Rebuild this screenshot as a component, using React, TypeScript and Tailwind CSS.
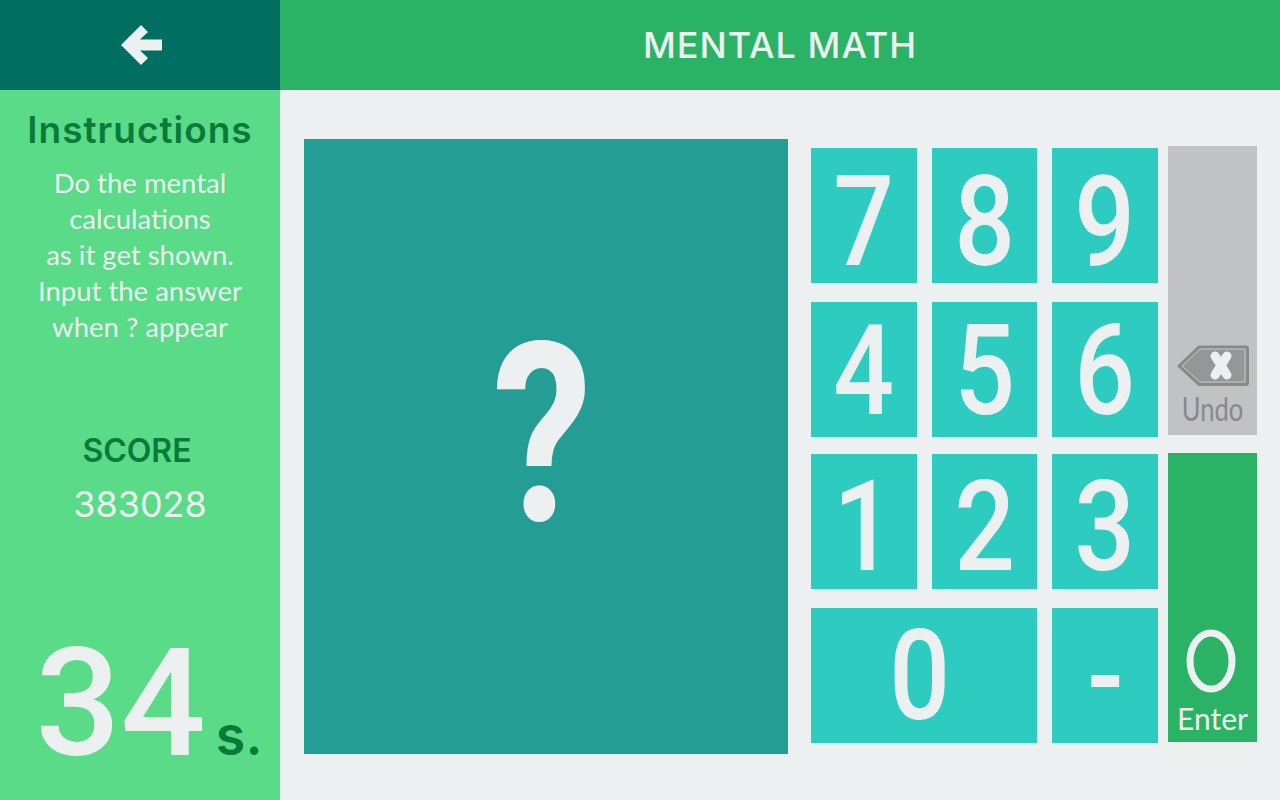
const font = { lato: "font-['Lato','Noto_Sans',sans-serif]" }

function Key({ label, className }: { label: string; className: string }) {
  return (
    <div className={`flex h-[135px] items-center justify-center bg-[#2ecbc0] font-['Roboto',sans-serif] text-[126px] font-medium leading-none text-[#ecf0f1] ${className}`}>
      <span className="inline-block scale-x-[0.85]">{label}</span>
    </div>
  )
}

function UndoIcon() {
  return (
    <svg width="72" height="42" viewBox="0 0 72 42">
      <path d="M22 2 H69 a1.500 1.500 0 0 1 1.500 1.500 V38 a1.500 1.500 0 0 1 -1.500 1.500 H22 L2 21 Z" fill="#949698" stroke="#87898b" strokeWidth="3" strokeLinejoin="round" />
      <path d="M23 4 H68 V37 H23 L5 21 Z" fill="none" stroke="#c9cabb" strokeWidth="1" />
      <path d="M38 11 L50 30 M50 11 L38 30" stroke="#ecf0f1" strokeWidth="9" strokeLinecap="round" />
    </svg>
  )
}

export default function App() {
  return (
    <div className={`flex h-[800px] w-[1280px] overflow-hidden bg-[#ecf0f1] ${font.lato}`}>
      {/* sidebar */}
      <div className="flex w-[280px] flex-col">
        <div className="flex h-[90px] items-center justify-center bg-[#006f61]">
          <svg width="42" height="42" viewBox="0 0 42 42" className="mr-[-1px]">
            <path d="M1 21 L21 1 L28 8 L20 15.500 H42 V26.500 H20 L28 34 L21 41 Z" fill="#ecf0f1" />
          </svg>
        </div>
        <div className="flex flex-1 flex-col items-center bg-[#59db87]">
          <h2 className="mt-[18px] whitespace-nowrap font-['Inter',sans-serif] text-[37px] font-semibold leading-[44px] tracking-[1px] text-[#0a7a3a]">Instructions</h2>
          <p className="mt-[13px] text-center text-[27.5px] leading-[36px] text-[#ecf0f1]">
            Do the mental
            <br />
            calculations
            <br />
            as it get shown.
            <br />
            Input the answer
            <br />
            when ? appear
          </p>
          <div className="mr-[6px] mt-[86px] font-['Inter',sans-serif] text-[32px] font-semibold leading-[40px] text-[#0a7a3a]">SCORE</div>
          <div className="mt-[11px] font-['Inter',sans-serif] text-[36px] leading-[44px] text-[#ecf0f1]">383028</div>
          <div className="mt-auto flex items-baseline pb-[21px] pl-[18px]">
            <span className="font-['Roboto',sans-serif] text-[150px] font-medium leading-[150px] text-[#ecf0f1]">34</span>
            <span className="ml-[10px] font-['Inter',sans-serif] text-[54px] font-semibold leading-none text-[#0a7a3a]">s.</span>
          </div>
        </div>
      </div>

      {/* main */}
      <div className="flex flex-1 flex-col">
        <div className="flex h-[90px] items-center justify-center bg-[#2ab365] font-['Inter',sans-serif] text-[36px] font-medium tracking-[1px] text-[#ecf0f1]">MENTAL MATH</div>
        <div className="flex flex-1 pl-[24px] pt-[49px]">
          <div className="flex h-[615px] w-[484px] items-center justify-center bg-[#249e95] pb-[22px] pr-[8px] font-['Roboto',sans-serif] text-[250px] font-bold leading-none text-[#ecf0f1]">
            <span className="inline-block scale-x-[0.8]">?</span>
          </div>
          <div className="ml-[23px] flex w-[347px] flex-col pt-[9px]">
            <div className="flex gap-[15px]">
              <Key label="7" className="w-[106px] pt-[12px]" />
              <Key label="8" className="w-[106px] pt-[12px]" />
              <Key label="9" className="w-[106px] pt-[12px]" />
            </div>
            <div className="mt-[19px] flex gap-[15px]">
              <Key label="4" className="w-[106px] pt-[3px]" />
              <Key label="5" className="w-[106px] pt-[3px]" />
              <Key label="6" className="w-[106px] pt-[3px]" />
            </div>
            <div className="mt-[17px] flex gap-[15px]">
              <Key label="1" className="w-[106px] pt-[10px]" />
              <Key label="2" className="w-[106px] pt-[10px]" />
              <Key label="3" className="w-[106px] pt-[10px]" />
            </div>
            <div className="mt-[19px] flex gap-[15px]">
              <Key label="0" className="w-[226px] pr-[8px]" />
              <Key label="-" className="w-[106px]" />
            </div>
          </div>
          <div className="ml-[10px] flex w-[89px] flex-col pt-[7px]">
            <div className="flex h-[289px] flex-col items-center justify-end bg-[#c1c2c4] pb-[6px]">
              <UndoIcon />
              <span className="mt-[2px] scale-x-[0.8] text-[32px] leading-[40px] text-[#87898b]">Undo</span>
            </div>
            <div className="mt-[18px] flex h-[289px] flex-col items-center justify-end bg-[#2ab365] pb-[4px]">
              <svg width="50" height="64" viewBox="0 0 50 64" className="mb-[3px] mr-[4px]">
                <ellipse cx="25" cy="32" rx="21" ry="28" fill="none" stroke="#ecf0f1" strokeWidth="7" />
              </svg>
              <span className="mt-[2px] text-[30px] leading-[40px] text-[#ecf0f1]">Enter</span>
            </div>
          </div>
        </div>
      </div>
    </div>
  )
}
